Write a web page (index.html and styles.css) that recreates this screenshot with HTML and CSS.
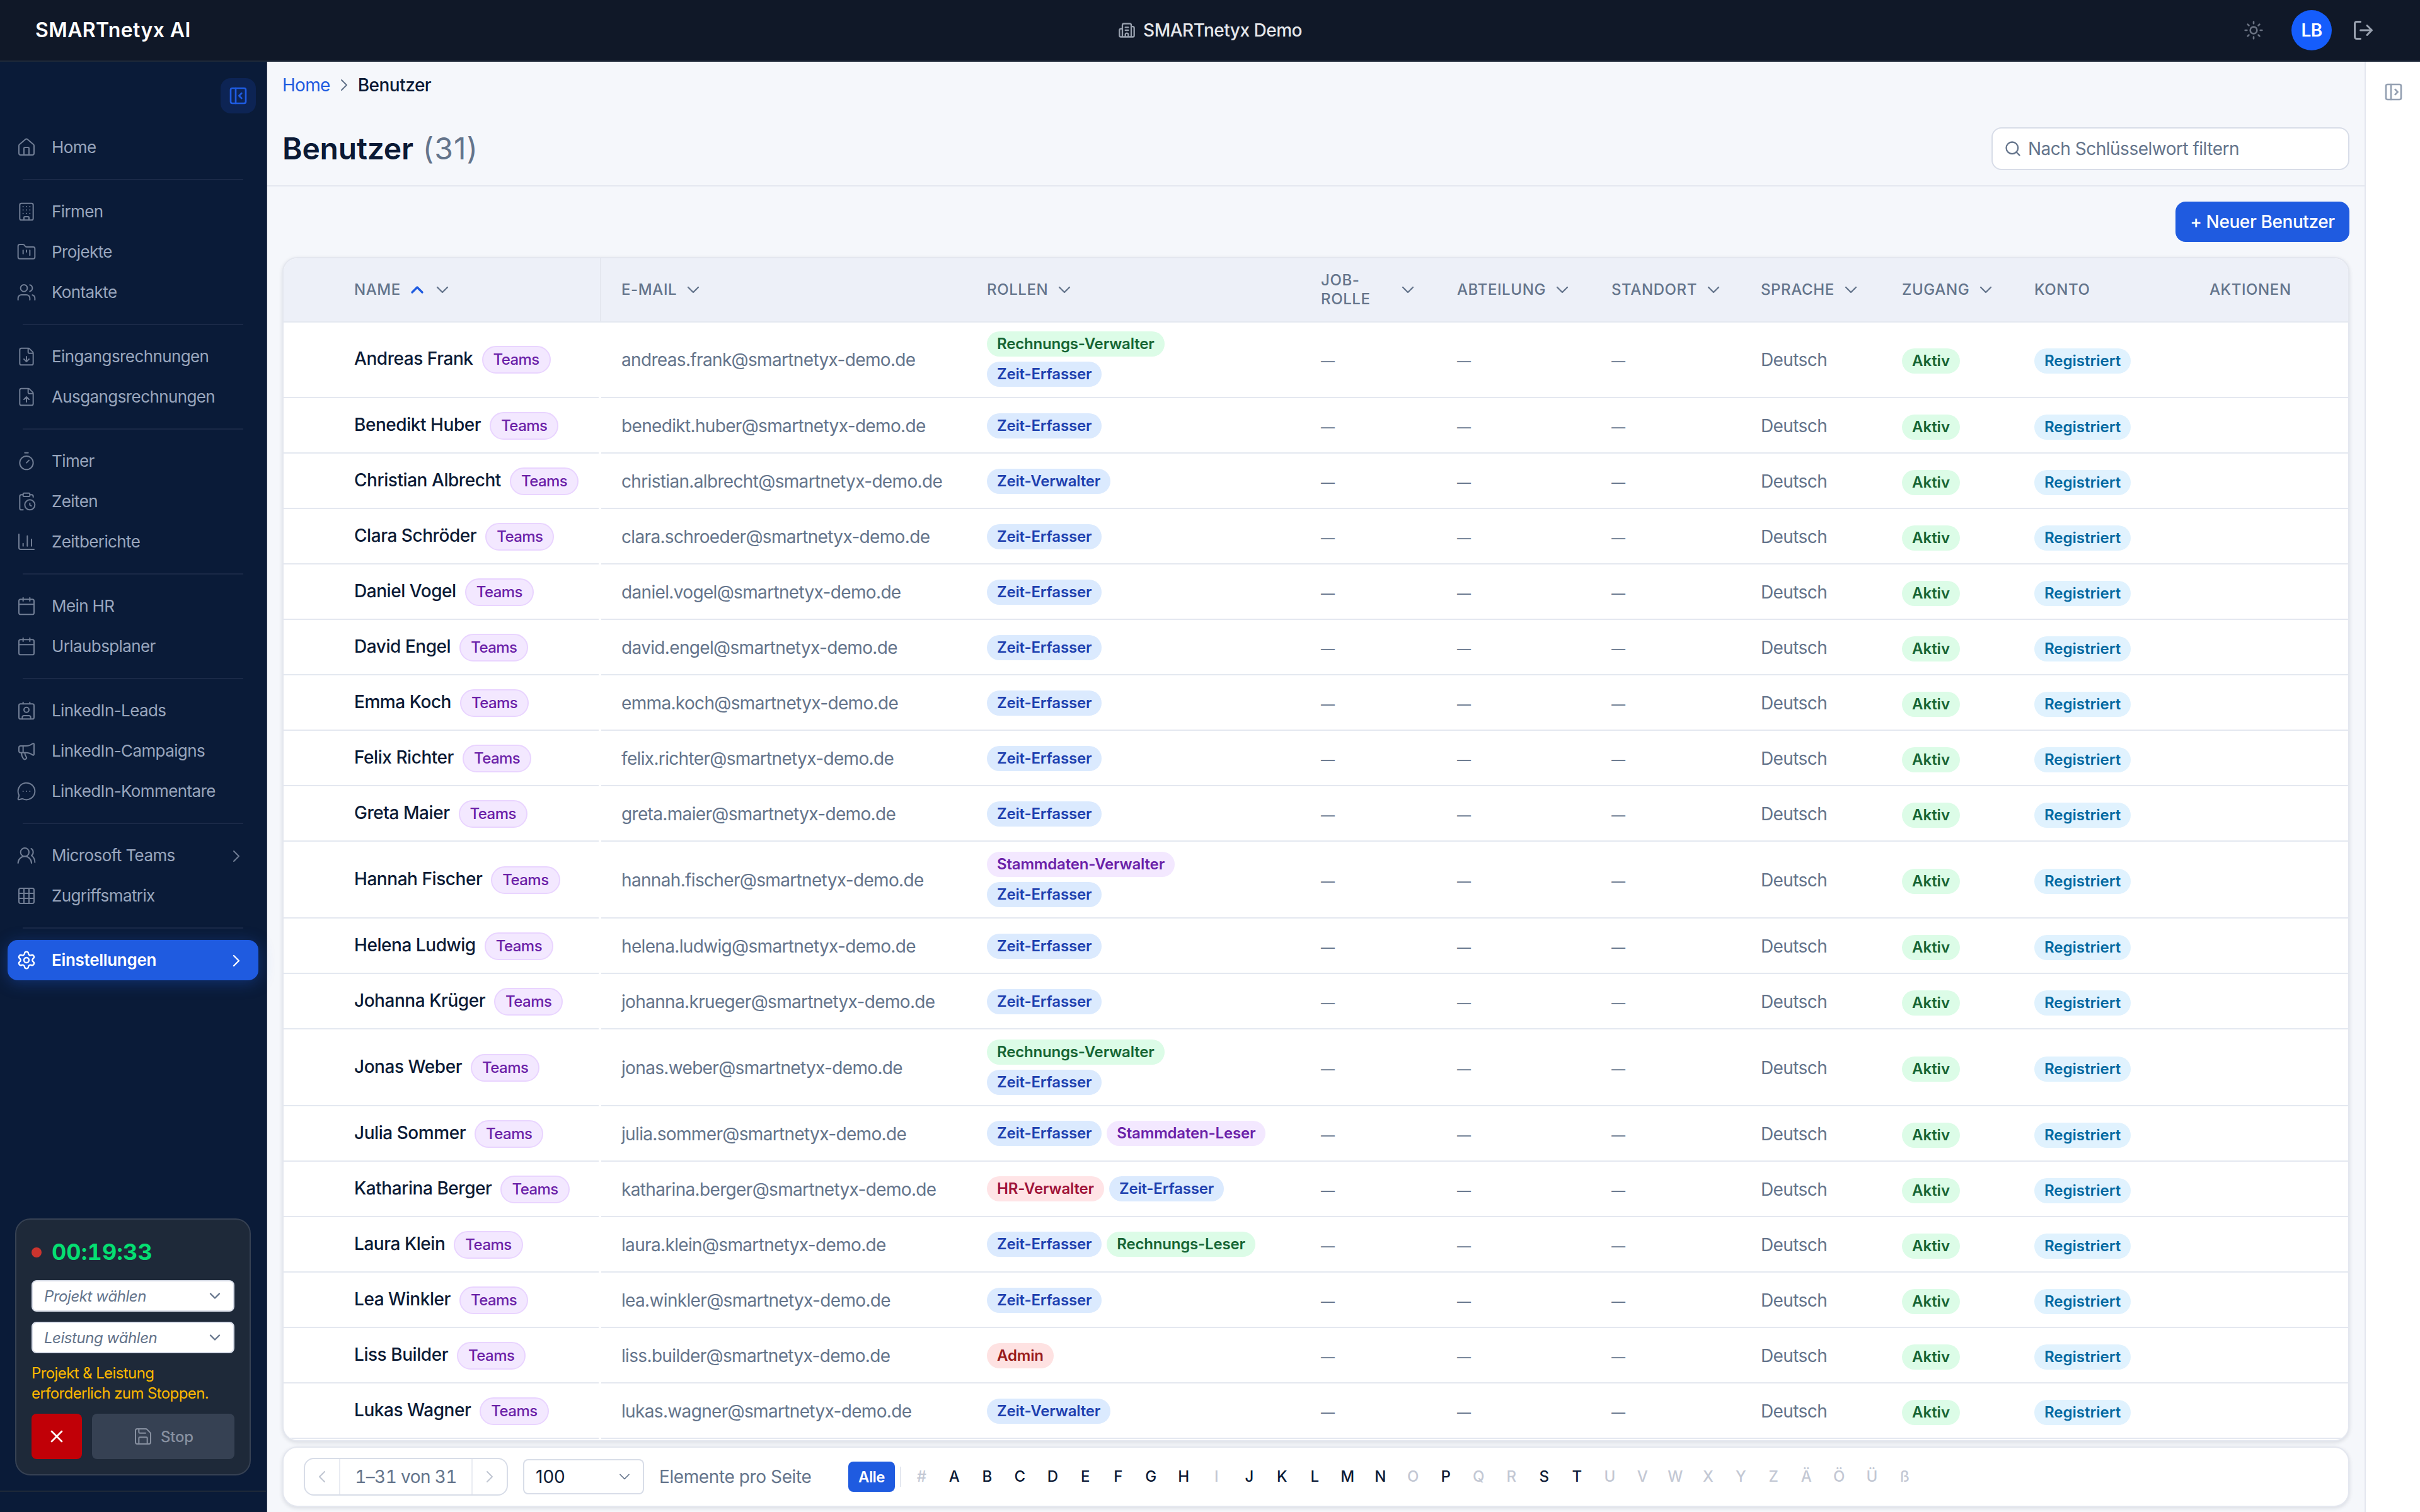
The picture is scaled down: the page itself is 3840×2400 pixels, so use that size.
FILE: index.html
```html
<!DOCTYPE html>
<html lang="de">

<head>
    <meta charset="UTF-8">
    <meta name="viewport" content="width=device-width, initial-scale=1.0">
    <title>Benutzer – SMARTnetyx AI</title>
    <link rel="stylesheet" href="styles.css">
</head>

<body>

    <!-- Icon sprite -->
    <svg class="sprite">
        <symbol id="i-org" viewBox="0 0 24 24"><path d="M10 12h4M10 8h4M14 21v-3a2 2 0 0 0-4 0v3M6 10H4a2 2 0 0 0-2 2v7a2 2 0 0 0 2 2h16a2 2 0 0 0 2-2V9a2 2 0 0 0-2-2h-2M6 21V5a2 2 0 0 1 2-2h8a2 2 0 0 1 2 2v16"/></symbol>
        <symbol id="i-sun" viewBox="0 0 24 24"><circle cx="12" cy="12" r="4"/><path d="M12 2v2M12 20v2M4.93 4.93l1.41 1.41M17.66 17.66l1.41 1.41M2 12h2M20 12h2M6.34 17.66l-1.41 1.41M19.07 4.93l-1.41 1.41"/></symbol>
        <symbol id="i-logout" viewBox="0 0 24 24"><path d="M9 21H5a2 2 0 0 1-2-2V5a2 2 0 0 1 2-2h4M16 17l5-5-5-5M21 12H9"/></symbol>
        <symbol id="i-panel-close" viewBox="0 0 24 24"><rect x="3" y="3" width="18" height="18" rx="2"/><path d="M9 3v18M16 15l-3-3 3-3"/></symbol>
        <symbol id="i-panel-open" viewBox="0 0 24 24"><rect x="3" y="3" width="18" height="18" rx="2"/><path d="M9 3v18M14 9l3 3-3 3"/></symbol>
        <symbol id="i-home" viewBox="0 0 24 24"><path d="M15 21v-8a1 1 0 0 0-1-1h-4a1 1 0 0 0-1 1v8"/><path d="M3 10a2 2 0 0 1 .709-1.528l7-6a2 2 0 0 1 2.582 0l7 6A2 2 0 0 1 21 10v9a2 2 0 0 1-2 2H5a2 2 0 0 1-2-2z"/></symbol>
        <symbol id="i-building" viewBox="0 0 24 24"><rect x="4" y="2" width="16" height="20" rx="2"/><path d="M9 22v-3a1 1 0 0 1 1-1h4a1 1 0 0 1 1 1v3M8 6h.01M12 6h.01M16 6h.01M8 10h.01M12 10h.01M16 10h.01M8 14h.01M12 14h.01M16 14h.01"/></symbol>
        <symbol id="i-folder" viewBox="0 0 24 24"><path d="M4 20h16a2 2 0 0 0 2-2V8a2 2 0 0 0-2-2h-7.93a2 2 0 0 1-1.66-.9l-.82-1.2A2 2 0 0 0 7.93 3H4a2 2 0 0 0-2 2v13c0 1.1.9 2 2 2ZM8 10v4M12 10v2M16 10v6"/></symbol>
        <symbol id="i-users" viewBox="0 0 24 24"><path d="M16 21v-2a4 4 0 0 0-4-4H6a4 4 0 0 0-4 4v2M16 3.128a4 4 0 0 1 0 7.744M22 21v-2a4 4 0 0 0-3-3.87"/><circle cx="9" cy="7" r="4"/></symbol>
        <symbol id="i-file-down" viewBox="0 0 24 24"><path d="M6 22a2 2 0 0 1-2-2V4a2 2 0 0 1 2-2h8a2.4 2.4 0 0 1 1.704.706l3.588 3.588A2.4 2.4 0 0 1 20 8v12a2 2 0 0 1-2 2zM14 2v5a1 1 0 0 0 1 1h5M12 18v-6M9 15l3 3 3-3"/></symbol>
        <symbol id="i-file-up" viewBox="0 0 24 24"><path d="M6 22a2 2 0 0 1-2-2V4a2 2 0 0 1 2-2h8a2.4 2.4 0 0 1 1.704.706l3.588 3.588A2.4 2.4 0 0 1 20 8v12a2 2 0 0 1-2 2zM14 2v5a1 1 0 0 0 1 1h5M12 12v6M15 15l-3-3-3 3"/></symbol>
        <symbol id="i-timer" viewBox="0 0 24 24"><path d="M10 2h4M12 14l3-3"/><circle cx="12" cy="14" r="8"/></symbol>
        <symbol id="i-clipboard" viewBox="0 0 24 24"><path d="M16 14v2.2l1.6 1M16 4h2a2 2 0 0 1 2 2v.832M8 4H6a2 2 0 0 0-2 2v14a2 2 0 0 0 2 2h2"/><circle cx="16" cy="16" r="6"/><rect x="8" y="2" width="8" height="4" rx="1"/></symbol>
        <symbol id="i-chart" viewBox="0 0 24 24"><path d="M3 3v16a2 2 0 0 0 2 2h16M18 17V9M13 17V5M8 17v-3"/></symbol>
        <symbol id="i-calendar" viewBox="0 0 24 24"><path d="M8 2v4M16 2v4M3 10h18"/><rect x="3" y="4" width="18" height="18" rx="2"/></symbol>
        <symbol id="i-contact" viewBox="0 0 24 24"><path d="M16 2v2M7 22v-2a2 2 0 0 1 2-2h6a2 2 0 0 1 2 2v2M8 2v2"/><circle cx="12" cy="11" r="3"/><rect x="3" y="4" width="18" height="18" rx="2"/></symbol>
        <symbol id="i-megaphone" viewBox="0 0 24 24"><path d="M11 6a13 13 0 0 0 8.4-2.8A1 1 0 0 1 21 4v12a1 1 0 0 1-1.6.8A13 13 0 0 0 11 14H5a2 2 0 0 1-2-2V8a2 2 0 0 1 2-2z"/><path d="M6 14a12 12 0 0 0 2.4 7.2 2 2 0 0 0 3.2-2.4A8 8 0 0 1 10 14M8 6v8"/></symbol>
        <symbol id="i-message" viewBox="0 0 24 24"><path d="M2.992 16.342a2 2 0 0 1 .094 1.167l-1.065 3.29a1 1 0 0 0 1.236 1.168l3.413-.998a2 2 0 0 1 1.099.092 10 10 0 1 0-4.777-4.719M8 12h.01M12 12h.01M16 12h.01"/></symbol>
        <symbol id="i-team" viewBox="0 0 24 24"><path d="M18 21a8 8 0 0 0-16 0"/><circle cx="10" cy="8" r="5"/><path d="M22 20c0-3.37-2-6.5-4-8a5 5 0 0 0-.45-8.3"/></symbol>
        <symbol id="i-grid" viewBox="0 0 24 24"><rect x="3" y="3" width="18" height="18" rx="2"/><path d="M3 9h18M3 15h18M9 3v18M15 3v18"/></symbol>
        <symbol id="i-settings" viewBox="0 0 24 24"><path d="M9.671 4.136a2.34 2.34 0 0 1 4.659 0 2.34 2.34 0 0 0 3.319 1.915 2.34 2.34 0 0 1 2.33 4.033 2.34 2.34 0 0 0 0 3.831 2.34 2.34 0 0 1-2.33 4.033 2.34 2.34 0 0 0-3.319 1.915 2.34 2.34 0 0 1-4.659 0 2.34 2.34 0 0 0-3.32-1.915 2.34 2.34 0 0 1-2.33-4.033 2.34 2.34 0 0 0 0-3.831A2.34 2.34 0 0 1 6.35 6.051a2.34 2.34 0 0 0 3.319-1.915"/><circle cx="12" cy="12" r="3"/></symbol>
        <symbol id="i-save" viewBox="0 0 24 24"><path d="M15.2 3a2 2 0 0 1 1.4.6l3.8 3.8a2 2 0 0 1 .6 1.4V19a2 2 0 0 1-2 2H5a2 2 0 0 1-2-2V5a2 2 0 0 1 2-2zM17 21v-7a1 1 0 0 0-1-1H8a1 1 0 0 0-1 1v7M7 3v4a1 1 0 0 0 1 1h7"/></symbol>
        <symbol id="i-x" viewBox="0 0 24 24"><path d="M18 6L6 18M6 6l12 12"/></symbol>
        <symbol id="i-search" viewBox="0 0 24 24"><path d="M21 21l-4.34-4.34"/><circle cx="11" cy="11" r="8"/></symbol>
        <symbol id="i-right" viewBox="0 0 24 24"><path d="M9 18l6-6-6-6"/></symbol>
        <symbol id="i-left" viewBox="0 0 24 24"><path d="M15 18l-6-6 6-6"/></symbol>
        <symbol id="i-down" viewBox="0 0 24 24"><path d="M6 9l6 6 6-6"/></symbol>
        <symbol id="i-up" viewBox="0 0 24 24"><path d="M18 15l-6-6-6 6"/></symbol>
    </svg>

    <header class="topbar">
        <div class="brand">SMARTnetyx AI</div>
        <div class="tenant"><svg class="icon"><use href="#i-org"/></svg>SMARTnetyx Demo</div>
        <div class="topbar-actions">
            <svg class="icon sun"><use href="#i-sun"/></svg>
            <div class="avatar">LB</div>
            <svg class="icon logout"><use href="#i-logout"/></svg>
        </div>
    </header>

    <div class="layout">
        <aside class="sidebar">
            <button class="collapse"><svg class="icon"><use href="#i-panel-close"/></svg></button>

            <nav class="nav">
                <a class="nav-item"><svg class="icon"><use href="#i-home"/></svg>Home</a>
                <hr>
                <a class="nav-item"><svg class="icon"><use href="#i-building"/></svg>Firmen</a>
                <a class="nav-item"><svg class="icon"><use href="#i-folder"/></svg>Projekte</a>
                <a class="nav-item"><svg class="icon"><use href="#i-users"/></svg>Kontakte</a>
                <hr>
                <a class="nav-item"><svg class="icon"><use href="#i-file-down"/></svg>Eingangsrechnungen</a>
                <a class="nav-item"><svg class="icon"><use href="#i-file-up"/></svg>Ausgangsrechnungen</a>
                <hr>
                <a class="nav-item"><svg class="icon"><use href="#i-timer"/></svg>Timer</a>
                <a class="nav-item"><svg class="icon"><use href="#i-clipboard"/></svg>Zeiten</a>
                <a class="nav-item"><svg class="icon"><use href="#i-chart"/></svg>Zeitberichte</a>
                <hr>
                <a class="nav-item"><svg class="icon"><use href="#i-calendar"/></svg>Mein HR</a>
                <a class="nav-item"><svg class="icon"><use href="#i-calendar"/></svg>Urlaubsplaner</a>
                <hr>
                <a class="nav-item"><svg class="icon"><use href="#i-contact"/></svg>LinkedIn-Leads</a>
                <a class="nav-item"><svg class="icon"><use href="#i-megaphone"/></svg>LinkedIn-Campaigns</a>
                <a class="nav-item"><svg class="icon"><use href="#i-message"/></svg>LinkedIn-Kommentare</a>
                <hr>
                <a class="nav-item"><svg class="icon"><use href="#i-team"/></svg>Microsoft Teams<svg class="icon more"><use href="#i-right"/></svg></a>
                <a class="nav-item"><svg class="icon"><use href="#i-grid"/></svg>Zugriffsmatrix</a>
                <hr>
                <a class="nav-item active"><svg class="icon"><use href="#i-settings"/></svg>Einstellungen<svg class="icon more"><use href="#i-right"/></svg></a>
            </nav>

            <section class="timer">
                <div class="timer-time"><span class="dot"></span>00:19:33</div>
                <div class="timer-select">Projekt wählen<svg class="icon"><use href="#i-down"/></svg></div>
                <div class="timer-select">Leistung wählen<svg class="icon"><use href="#i-down"/></svg></div>
                <p class="timer-hint">Projekt &amp; Leistung<br>erforderlich zum Stoppen.</p>
                <div class="timer-buttons">
                    <button class="btn-cancel"><svg class="icon"><use href="#i-x"/></svg></button>
                    <button class="btn-stop"><svg class="icon"><use href="#i-save"/></svg>Stop</button>
                </div>
            </section>
            <div class="sidebar-footer"></div>
        </aside>

        <main class="main">
            <div class="page-head">
                <div class="breadcrumb"><a>Home</a><svg class="icon"><use href="#i-right"/></svg><span>Benutzer</span></div>
                <div class="title-row">
                    <h1>Benutzer <span class="count">(31)</span></h1>
                    <div class="search"><svg class="icon"><use href="#i-search"/></svg>Nach Schlüsselwort filtern</div>
                </div>
            </div>

            <div class="toolbar"><button class="btn-new">+ Neuer Benutzer</button></div>

            <section class="table">
                <div class="row head">
                    <div class="cell name">Name<svg class="icon sorted"><use href="#i-up"/></svg><svg class="icon"><use href="#i-down"/></svg></div>
                    <div class="cell">E-Mail<svg class="icon"><use href="#i-down"/></svg></div>
                    <div class="cell">Rollen<svg class="icon"><use href="#i-down"/></svg></div>
                    <div class="cell job"><span>Job-Rolle</span><svg class="icon"><use href="#i-down"/></svg></div>
                    <div class="cell">Abteilung<svg class="icon"><use href="#i-down"/></svg></div>
                    <div class="cell">Standort<svg class="icon"><use href="#i-down"/></svg></div>
                    <div class="cell">Sprache<svg class="icon"><use href="#i-down"/></svg></div>
                    <div class="cell">Zugang<svg class="icon"><use href="#i-down"/></svg></div>
                    <div class="cell">Konto</div>
                    <div class="cell">Aktionen</div>
                </div>
                <div id="rows"></div>
            </section>

            <footer class="footer">
                <div class="pager">
                    <span class="pager-btn"><svg class="icon"><use href="#i-left"/></svg></span>
                    <span class="pager-range">1–31 von 31</span>
                    <span class="pager-btn"><svg class="icon"><use href="#i-right"/></svg></span>
                </div>
                <div class="page-size">100<svg class="icon"><use href="#i-down"/></svg></div>
                <span class="per-page">Elemente pro Seite</span>
                <button class="btn-all">Alle</button>
                <div class="letters" id="letters"></div>
            </footer>
        </main>

        <aside class="rightbar"><svg class="icon"><use href="#i-panel-open"/></svg></aside>
    </div>

    <script>
        const roleColors = {
            "Zeit-Erfasser": "blue",
            "Zeit-Verwalter": "blue",
            "Rechnungs-Verwalter": "green",
            "Rechnungs-Leser": "green",
            "Stammdaten-Verwalter": "purple",
            "Stammdaten-Leser": "purple",
            "HR-Verwalter": "rose",
            "Admin": "red"
        };

        // name, mail, roles
        const users = [
            ["Andreas Frank", "andreas.frank", ["Rechnungs-Verwalter", "Zeit-Erfasser"]],
            ["Benedikt Huber", "benedikt.huber", ["Zeit-Erfasser"]],
            ["Christian Albrecht", "christian.albrecht", ["Zeit-Verwalter"]],
            ["Clara Schröder", "clara.schroeder", ["Zeit-Erfasser"]],
            ["Daniel Vogel", "daniel.vogel", ["Zeit-Erfasser"]],
            ["David Engel", "david.engel", ["Zeit-Erfasser"]],
            ["Emma Koch", "emma.koch", ["Zeit-Erfasser"]],
            ["Felix Richter", "felix.richter", ["Zeit-Erfasser"]],
            ["Greta Maier", "greta.maier", ["Zeit-Erfasser"]],
            ["Hannah Fischer", "hannah.fischer", ["Stammdaten-Verwalter", "Zeit-Erfasser"]],
            ["Helena Ludwig", "helena.ludwig", ["Zeit-Erfasser"]],
            ["Johanna Krüger", "johanna.krueger", ["Zeit-Erfasser"]],
            ["Jonas Weber", "jonas.weber", ["Rechnungs-Verwalter", "Zeit-Erfasser"]],
            ["Julia Sommer", "julia.sommer", ["Zeit-Erfasser", "Stammdaten-Leser"]],
            ["Katharina Berger", "katharina.berger", ["HR-Verwalter", "Zeit-Erfasser"]],
            ["Laura Klein", "laura.klein", ["Zeit-Erfasser", "Rechnungs-Leser"]],
            ["Lea Winkler", "lea.winkler", ["Zeit-Erfasser"]],
            ["Liss Builder", "liss.builder", ["Admin"]],
            ["Lukas Wagner", "lukas.wagner", ["Zeit-Verwalter"]]
        ];

        document.getElementById("rows").innerHTML = users.map(([name, mail, roles]) => `
            <div class="row">
                <div class="cell name"><span>${name}</span><span class="tag">Teams</span></div>
                <div class="cell mail">${mail}@smartnetyx-demo.de</div>
                <div class="cell roles">${roles.map(r => `<span class="pill ${roleColors[r]}">${r}</span>`).join("")}</div>
                <div class="cell dash">—</div>
                <div class="cell dash">—</div>
                <div class="cell dash">—</div>
                <div class="cell">Deutsch</div>
                <div class="cell status"><span class="pill green">Aktiv</span></div>
                <div class="cell status"><span class="pill sky">Registriert</span></div>
                <div class="cell"></div>
            </div>`).join("");

        const enabled = "ABCDEFGHJKLMNPST";
        document.getElementById("letters").innerHTML = [..."#ABCDEFGHIJKLMNOPQRSTUVWXYZÄÖÜß"]
            .map(l => `<span class="letter${enabled.includes(l) ? "" : " off"}">${l}</span>`).join("");
    </script>

</body>

</html>
```
FILE: styles.css
```css
* {
    margin: 0;
    padding: 0;
    box-sizing: border-box;
}

body {
    width: 3840px;
    height: 2400px;
    overflow: hidden;
    font-family: Inter, "Liberation Sans", sans-serif;
    font-size: 28px;
    letter-spacing: -0.6px;
    color: #0b1a35;
    background: #f5f7fb;
}

button {
    font: inherit;
    letter-spacing: inherit;
    border: none;
    display: flex;
    align-items: center;
    justify-content: center;
}

.sprite {
    display: none;
}

.icon {
    width: 32px;
    height: 32px;
    flex: none;
    fill: none;
    stroke: currentColor;
    stroke-width: 1.5;
    stroke-linecap: round;
    stroke-linejoin: round;
}

/* Top bar */
.topbar {
    height: 98px;
    display: grid;
    grid-template-columns: 1fr auto 1fr;
    align-items: center;
    background: #101828;
    border-bottom: 2px solid #1e2939;
}

.brand {
    padding: 0 0 2px 56px;
    font-size: 32px;
    font-weight: 600;
    letter-spacing: 0.4px;
    color: #fff;
}

.tenant {
    display: flex;
    align-items: center;
    gap: 12px;
    font-weight: 500;
    letter-spacing: -0.5px;
    color: #e5e7eb;
}

.tenant .icon {
    width: 28px;
    height: 28px;
    stroke-width: 2;
    color: #99a1af;
}

.topbar-actions {
    display: flex;
    align-items: center;
    justify-content: flex-end;
    padding-right: 72px;
}

.sun {
    color: #6a7282;
    stroke-width: 2;
}

.avatar {
    width: 64px;
    height: 64px;
    margin: 0 32px 0 44px;
    display: flex;
    align-items: center;
    justify-content: center;
    border-radius: 50%;
    background: #155dfc;
    color: #fff;
    font-weight: 600;
}

.logout {
    width: 36px;
    height: 36px;
    stroke-width: 2;
    color: #99a1af;
}

.layout {
    display: flex;
    height: 2302px;
}

/* Sidebar */
.sidebar {
    width: 424px;
    flex: none;
    display: flex;
    flex-direction: column;
    padding-top: 26px;
    background: #0a1b38;
    border-right: 2px solid #1c2a44;
}

.collapse {
    align-self: flex-end;
    width: 56px;
    height: 56px;
    margin-right: 16px;
    border-radius: 16px;
    background: #0d2454;
    color: #1f5be0;
}

.collapse .icon {
    stroke-width: 2;
}

.nav {
    margin-top: 22px;
    padding: 0 12px;
}

.nav hr {
    height: 2px;
    margin: 18px 24px;
    border: none;
    background: #1a2947;
}

.nav-item {
    display: flex;
    align-items: center;
    gap: 24px;
    height: 64px;
    padding: 0 19px 2px 14px;
    border-radius: 16px;
    font-size: 26px;
    color: #99a6bd;
}

.nav-item .icon {
    margin-top: 2px;
    color: #707d94;
}

.nav-item .more {
    margin: 4px 0 0 auto;
}

.nav-item.active {
    background: #1f5be0;
    box-shadow: 0 4px 24px rgba(31, 91, 224, 0.35);
    color: #fff;
    font-weight: 600;
    letter-spacing: -0.3px;
}

.nav-item.active .icon {
    color: #fff;
    stroke-width: 1.75;
}

.timer {
    display: flex;
    flex-direction: column;
    gap: 16px;
    margin: auto 24px 24px;
    padding: 24px;
    border: 2px solid #364153;
    border-radius: 24px;
    background: #1e2939;
}

.timer-time {
    display: flex;
    align-items: center;
    gap: 16px;
    height: 56px;
    padding-bottom: 2px;
    font-size: 36px;
    font-weight: 700;
    font-variant-numeric: tabular-nums;
    letter-spacing: 0.1px;
    color: #05df72;
}

.dot {
    width: 16px;
    height: 16px;
    margin-top: 2px;
    border-radius: 50%;
    background: #cb342e;
}

.timer-select {
    display: flex;
    align-items: center;
    justify-content: space-between;
    height: 50px;
    padding: 0 15px 0 18px;
    border: 2px solid #d8dde8;
    border-radius: 8px;
    background: #fff;
    color: #64748b;
    font-size: 24px;
    font-style: italic;
    letter-spacing: -0.45px;
}

.timer-select .icon {
    width: 28px;
    height: 28px;
    stroke-width: 2;
}

.timer-hint {
    font-size: 24px;
    line-height: 32px;
    color: #ffb900;
}

.timer-buttons {
    display: flex;
    gap: 16px;
    height: 72px;
}

.btn-cancel {
    width: 80px;
    border-radius: 8px;
    background: #c10007;
    color: #fff;
}

.btn-cancel .icon {
    stroke-width: 2;
}

.btn-stop {
    flex: 1;
    gap: 12px;
    border-radius: 8px;
    background: #364153;
    color: #8790a0;
    font-size: 24px;
    font-weight: 500;
    letter-spacing: -0.2px;
}

.sidebar-footer {
    height: 34px;
    border-top: 2px solid #1e2939;
}

/* Main */
.main {
    flex: 1;
}

.page-head {
    padding: 16px 24px 24px;
    border-bottom: 2px solid #e4e8f0;
}

.breadcrumb {
    display: flex;
    align-items: center;
    gap: 6px;
    height: 42px;
    letter-spacing: -0.7px;
}

.breadcrumb span {
    font-weight: 500;
    letter-spacing: -0.5px;
}

.breadcrumb a {
    color: #1f5be0;
}

.breadcrumb .icon {
    color: #64748b;
}

.title-row {
    display: flex;
    align-items: center;
    justify-content: space-between;
    height: 68px;
    margin-top: 46px;
}

h1 {
    padding-bottom: 2px;
    font-size: 48px;
    font-weight: 600;
    letter-spacing: -0.2px;
}

.count {
    margin-left: 3px;
    font-weight: 400;
    letter-spacing: 1px;
    color: #64748b;
}

.search {
    display: flex;
    align-items: center;
    gap: 10px;
    width: 568px;
    height: 68px;
    padding-left: 18px;
    border: 2px solid #d8dde8;
    border-radius: 16px;
    background: #fff;
    color: #64748b;
    letter-spacing: -0.5px;
}

.search .icon {
    width: 28px;
    height: 28px;
    stroke-width: 2;
}

.toolbar {
    display: flex;
    justify-content: flex-end;
    padding: 24px;
}

.btn-new {
    width: 276px;
    height: 64px;
    border-radius: 16px;
    background: #1f5be0;
    color: #fff;
    font-weight: 500;
    letter-spacing: -0.4px;
}

/* Table */
.table {
    height: 1880px;
    margin: 0 24px 8px;
    overflow: hidden;
    border: 2px solid #e4e7ef;
    border-radius: 24px;
    background: #fff;
    box-shadow: 0 2px 6px rgba(16, 24, 40, 0.12);
}

.row {
    display: grid;
    grid-template-columns: 504px 580px 530px 216px 245px 237px 224px 210px 278px 252px;
    min-height: 88px;
}

.cell {
    display: flex;
    align-items: center;
    padding: 2px 32px 0;
    border-bottom: 2px solid #e4e8f0;
    color: #64748b;
}

.cell.name {
    padding-left: 112px;
    padding-right: 0;
}

.cell.mail {
    letter-spacing: -0.66px;
}

.row:not(.head) .name {
    align-items: baseline;
    align-content: center;
    flex-wrap: wrap;
    gap: 14px;
    margin-right: 4px;
    color: #0b1a35;
    font-weight: 500;
    letter-spacing: -0.45px;
}

.row.head {
    position: relative;
    height: 102px;
    margin-bottom: -2px;
    background: #edf0f8;
    font-size: 24px;
    font-weight: 500;
    line-height: 30px;
    letter-spacing: 0.6px;
    text-transform: uppercase;
}

.head .cell {
    gap: 10px;
    padding-top: 0;
}

.head .name {
    border-right: 2px solid #e4e7ef;
    gap: 8px;
}

.head .icon {
    stroke-width: 1.75;
}

.head .sorted {
    margin-left: 2px;
    color: #1f5be0;
    stroke-width: 2.5;
}

.job span {
    flex: 1;
}

.head .job {
    padding-right: 30px;
}

.tag {
    height: 44px;
    padding: 0 16px;
    border: 2px solid #e9d4ff;
    border-radius: 22px;
    background: #f3e8ff;
    color: #6b21a8;
    font-size: 24px;
    line-height: 40px;
    letter-spacing: -0.55px;
}

.cell.roles {
    flex-wrap: wrap;
    align-content: center;
    gap: 8px;
    padding-top: 16px;
    padding-bottom: 14px;
}

/* two stacked roles keep an even padding */
.row:has(.roles .pill:nth-child(2)) .roles {
    padding-bottom: 16px;
}

.cell.dash {
    padding-top: 6px;
    font-size: 22px;
}

.cell.status {
    padding-top: 6px;
}

.cell.status .pill {
    letter-spacing: 0;
}

.pill {
    height: 40px;
    padding: 0 16px;
    border-radius: 20px;
    font-size: 24px;
    font-weight: 600;
    line-height: 40px;
    letter-spacing: -0.18px;
}

.blue {
    background: #dbeafe;
    color: #1e40af;
}

.green {
    background: #dcfce7;
    color: #166534;
}

.purple {
    background: #f3e8ff;
    color: #6b21a8;
}

.rose {
    background: #ffe4e6;
    color: #9f1239;
}

.red {
    background: #fee2e2;
    color: #991b1b;
}

.sky {
    background: #e0f2fe;
    color: #0369a1;
}

/* Footer */
.footer {
    display: flex;
    align-items: center;
    height: 96px;
    margin: 0 24px;
    padding-left: 32px;
    border: 2px solid #e4e7ef;
    border-radius: 24px;
    background: #fff;
    box-shadow: 0 2px 6px rgba(16, 24, 40, 0.12);
    color: #64748b;
}

.pager {
    display: flex;
    width: 324px;
    height: 60px;
    border: 2px solid #d8dde8;
    border-radius: 16px;
}

.pager-btn {
    width: 54px;
    display: flex;
    align-items: center;
    justify-content: center;
    color: #c0c6d2;
}

.pager-range {
    flex: 1;
    border-left: 2px solid #e9ecf2;
    border-right: 2px solid #e9ecf2;
    text-align: center;
    line-height: 56px;
    font-variant-numeric: tabular-nums;
}

.page-size {
    display: flex;
    align-items: center;
    justify-content: space-between;
    width: 192px;
    height: 56px;
    margin: 0 24px 0 24px;
    padding: 0 15px 0 18px;
    border: 2px solid #d8dde8;
    border-radius: 8px;
    color: #0b1a35;
    letter-spacing: 0;
}

.page-size .icon {
    width: 28px;
    height: 28px;
    color: #64748b;
}

.per-page {
    width: 300px;
    letter-spacing: -0.4px;
}

.btn-all {
    width: 74px;
    height: 48px;
    border-radius: 8px;
    background: #1f5be0;
    color: #fff;
    font-size: 24px;
    font-weight: 600;
}

.letters {
    display: flex;
    gap: 4px;
    height: 32px;
    margin-left: 8px;
    padding-left: 8px;
    border-left: 2px solid #e4e8f0;
}

.letter {
    width: 48px;
    text-align: center;
    font-size: 24px;
    font-weight: 500;
    line-height: 32px;
    color: #0b1a35;
}

.letter.off {
    color: #c3c8d4;
}

/* Right panel */
.rightbar {
    width: 88px;
    flex: none;
    padding: 32px 0 0 28px;
    background: #fff;
    border-left: 2px solid #e4e7ef;
    color: #94a0b2;
}

.rightbar .icon {
    stroke-width: 2;
}
```
